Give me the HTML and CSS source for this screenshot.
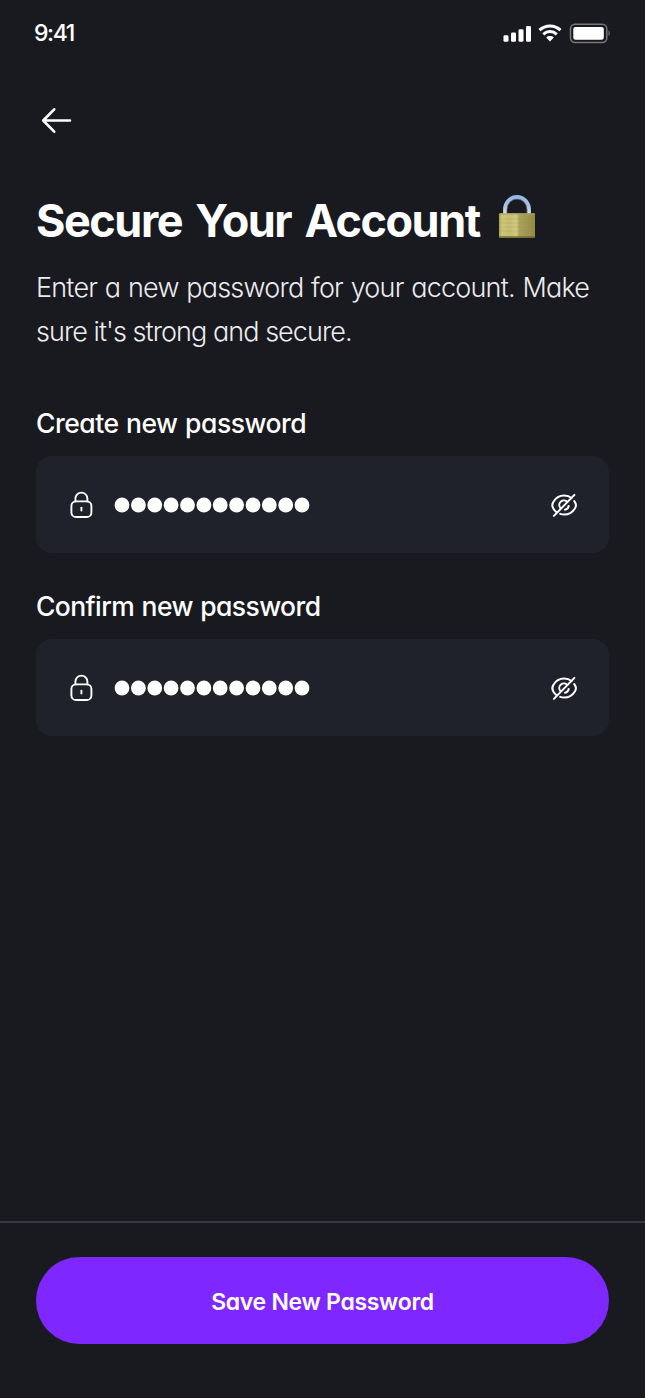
FILE: index.html
```
<!DOCTYPE html>
<html lang="en">
<head>
<meta charset="utf-8">
<title>Secure Your Account</title>
<link rel="stylesheet" href="styles.css">
</head>
<body>
<svg width="0" height="0" class="sprite" aria-hidden="true">
  <symbol id="lock" viewBox="0 0 26 30">
    <g fill="none" stroke="#fff" stroke-width="1.9" stroke-linecap="round" stroke-linejoin="round">
      <path d="M7.400 11.400V8.600a6 6 0 0 1 12 0V11.400"/>
      <rect x="3.400" y="11.400" width="20" height="15.600" rx="4.600"/>
      <path d="M13.400 17.600v3"/>
    </g>
  </symbol>
  <symbol id="eye-off" viewBox="0 0 28 26">
    <g fill="none" stroke="#fff" stroke-width="2" stroke-linecap="round" stroke-linejoin="round">
      <path d="M21.500 6.100C19.500 4.400 17 3.600 14.200 3.600 9.500 3.600 5.500 6.200 3.300 10.100c-1.400 2.200-1.400 4.200 0 6.400.8 1.400 1.800 2.500 3 3.500"/>
      <path d="M10.200 21.900c1.300.5 2.600.7 4 .7 4.700 0 8.500-2.600 10.700-6.100 1.400-2.200 1.400-4.200 0-6.400l-.7-1.100"/>
      <path d="M17.300 10a4.600 4.600 0 0 0-7.200 5.700"/>
      <path d="M18.700 14a4.600 4.600 0 0 1-3.700 3.700"/>
      <path d="M24.400 2.900 3.900 23.900"/>
    </g>
  </symbol>
  <symbol id="dots" viewBox="0 0 200 16">
    <g fill="#fff">
      <circle cx="8" cy="8" r="7.400"/><circle cx="24.400" cy="8" r="7.400"/><circle cx="40.750" cy="8" r="7.400"/><circle cx="57.100" cy="8" r="7.400"/><circle cx="73.500" cy="8" r="7.400"/><circle cx="89.900" cy="8" r="7.400"/><circle cx="106.200" cy="8" r="7.400"/><circle cx="122.600" cy="8" r="7.400"/><circle cx="139" cy="8" r="7.400"/><circle cx="155.300" cy="8" r="7.400"/><circle cx="171.700" cy="8" r="7.400"/><circle cx="188" cy="8" r="7.400"/>
    </g>
  </symbol>
</svg>
<div class="screen">
  <header class="status">
    <span class="time">9:41</span>
    <svg class="indicators" width="108" height="22" viewBox="0 0 108 22">
      <g fill="#fff">
        <rect x="0.500" y="13.300" width="5" height="6.500" rx="1.300"/>
        <rect x="8" y="10.500" width="5" height="9.300" rx="1.300"/>
        <rect x="15.500" y="7.300" width="5" height="12.500" rx="1.300"/>
        <rect x="23" y="4.100" width="5" height="15.700" rx="1.300"/>
        <path d="M47 14c1.500 0 2.800.5 3.800 1.400L47 19.600l-3.800-4.200c1-.9 2.300-1.400 3.800-1.400z"/>
        <rect x="70.300" y="5" width="30.500" height="12.800" rx="2.200"/>
      </g>
      <g fill="none" stroke="#fff" stroke-width="3">
        <path d="M36.500 8.200a15.200 15.200 0 0 1 21 0"/>
        <path d="M40.300 12.300a9.700 9.700 0 0 1 13.400 0"/>
      </g>
      <rect x="67.500" y="2.200" width="36.300" height="18.400" rx="4.500" fill="none" stroke="#76777b" stroke-width="1.500"/>
      <path d="M105.500 8.600c1.700.8 1.700 4.800 0 5.600z" fill="#76777b"/>
    </svg>
  </header>
  <nav class="nav">
    <svg width="32" height="28" viewBox="0 0 32 28" fill="none" stroke="#fff" stroke-width="2.600" stroke-linecap="round" stroke-linejoin="round">
      <path d="M29 14.500H2.200M13.200 3.300 2.200 14.500l11 11.200"/>
    </svg>
  </nav>
  <main class="content">
    <h1 class="title"><span>Secure Your Account</span>
      <svg class="padlock" width="38" height="46" viewBox="0 0 38 46">
        <defs>
          <linearGradient id="brass" x1="0" x2="1">
            <stop offset="0" stop-color="#a89f51"/><stop offset=".08" stop-color="#cdc577"/><stop offset=".3" stop-color="#c5bd70"/><stop offset=".48" stop-color="#d1ca80"/><stop offset=".56" stop-color="#aba35c"/><stop offset="1" stop-color="#928a48"/>
          </linearGradient>
          <linearGradient id="steel" x1="0" y1="0" x2="0" y2="1">
            <stop offset="0" stop-color="#93b8e6"/><stop offset=".5" stop-color="#aac3e4"/><stop offset="1" stop-color="#dce7f2"/>
          </linearGradient>
        </defs>
        <path d="M7 21V15.500a12 12.500 0 0 1 24 0V21" fill="none" stroke="url(#steel)" stroke-width="3.800"/>
        <path d="M9.100 20V15.500a9.900 10.400 0 0 1 19.800 0V20" fill="none" stroke="#64615c" stroke-width=".8"/>
        <rect x="1" y="19.200" width="36" height="24.600" rx="1.200" fill="url(#brass)"/>
        <path d="M1.500 20h35" stroke="#aaa362"/>
        <path d="M2 25h34M2 29h34M2 33h34M2 37h34" stroke="#8d833d" stroke-opacity=".15"/>
        <path d="M1.500 43h35" stroke="#756b31" stroke-width="1.400"/>
      </svg>
    </h1>
    <p class="lead"><span class="line-a">Enter a new password for your account. Make</span><br><span class="line-b">sure it's strong and secure.</span></p>
    <section class="field">
      <h2 class="label label-create">Create new password</h2>
      <div class="box">
        <svg width="26" height="30"><use href="#lock"/></svg>
        <svg class="dots" width="200" height="16"><use href="#dots"/></svg>
        <svg width="28" height="26"><use href="#eye-off"/></svg>
      </div>
    </section>
    <section class="field">
      <h2 class="label label-confirm">Confirm new password</h2>
      <div class="box">
        <svg width="26" height="30"><use href="#lock"/></svg>
        <svg class="dots" width="200" height="16"><use href="#dots"/></svg>
        <svg width="28" height="26"><use href="#eye-off"/></svg>
      </div>
    </section>
  </main>
  <footer class="footer">
    <button class="save">Save New Password</button>
  </footer>
</div>
</body>
</html>
```
FILE: styles.css
```
* { box-sizing: border-box; }
body {
  margin: 0;
  background: #191a1f;
  color: #fff;
  font-family: Inter, Lato, sans-serif;
  font-feature-settings: "cv11" 1;
}
.sprite { display: block; }
.screen {
  display: flex;
  flex-direction: column;
  height: 1398px;
}
.status {
  display: flex;
  justify-content: space-between;
  align-items: center;
  height: 66px;
  padding: 0 34px 0 34px;
}
.time { font-size: 23px; font-weight: 500; letter-spacing: -1.400px; }
.nav { height: 122px; padding: 40px 0 0 41px; }
.nav svg { display: block; }
.content { padding: 0 36px; flex: 1; }
.title {
  display: flex;
  gap: 18px;
  align-items: flex-start;
  margin: 0;
  height: 78px;
  line-height: 66px;
  font-size: 45px;
  font-weight: 650;
  letter-spacing: -1.470px;
  word-spacing: 4px;
  white-space: nowrap;
}
.padlock { margin-top: 6px; }
.lead {
  margin: 0;
  height: 132px;
  line-height: 43.500px;
  font-size: 27px;
  font-weight: 300;
  color: #ececee;
  white-space: nowrap;
}
.line-a { letter-spacing: -0.800px; word-spacing: 0.900px; }
.line-b { letter-spacing: -0.950px; }
.field { height: 183.300px; }
.label {
  margin: 0;
  height: 58px;
  line-height: 51px;
  font-size: 26.500px;
  font-weight: 500;
  letter-spacing: -0.500px;
  word-spacing: 1px;
  white-space: nowrap;
}
.label-confirm { letter-spacing: -0.600px; }
.box {
  display: flex;
  align-items: center;
  height: 97px;
  padding: 0 31px 0 32px;
  border-radius: 16px;
  background: #1f222a;
}
.dots { margin: 0 auto 0 20px; }
.footer {
  height: 177px;
  padding: 34px 36px 0;
  border-top: 2px solid #35383f;
}
.save {
  display: block;
  width: 100%;
  height: 87px;
  padding: 2px 0 0;
  border: 0;
  border-radius: 44px;
  background: #7f27ff;
  color: #fff;
  font: inherit;
  font-size: 23px;
  font-weight: 600;
  letter-spacing: -0.300px;
}
```
